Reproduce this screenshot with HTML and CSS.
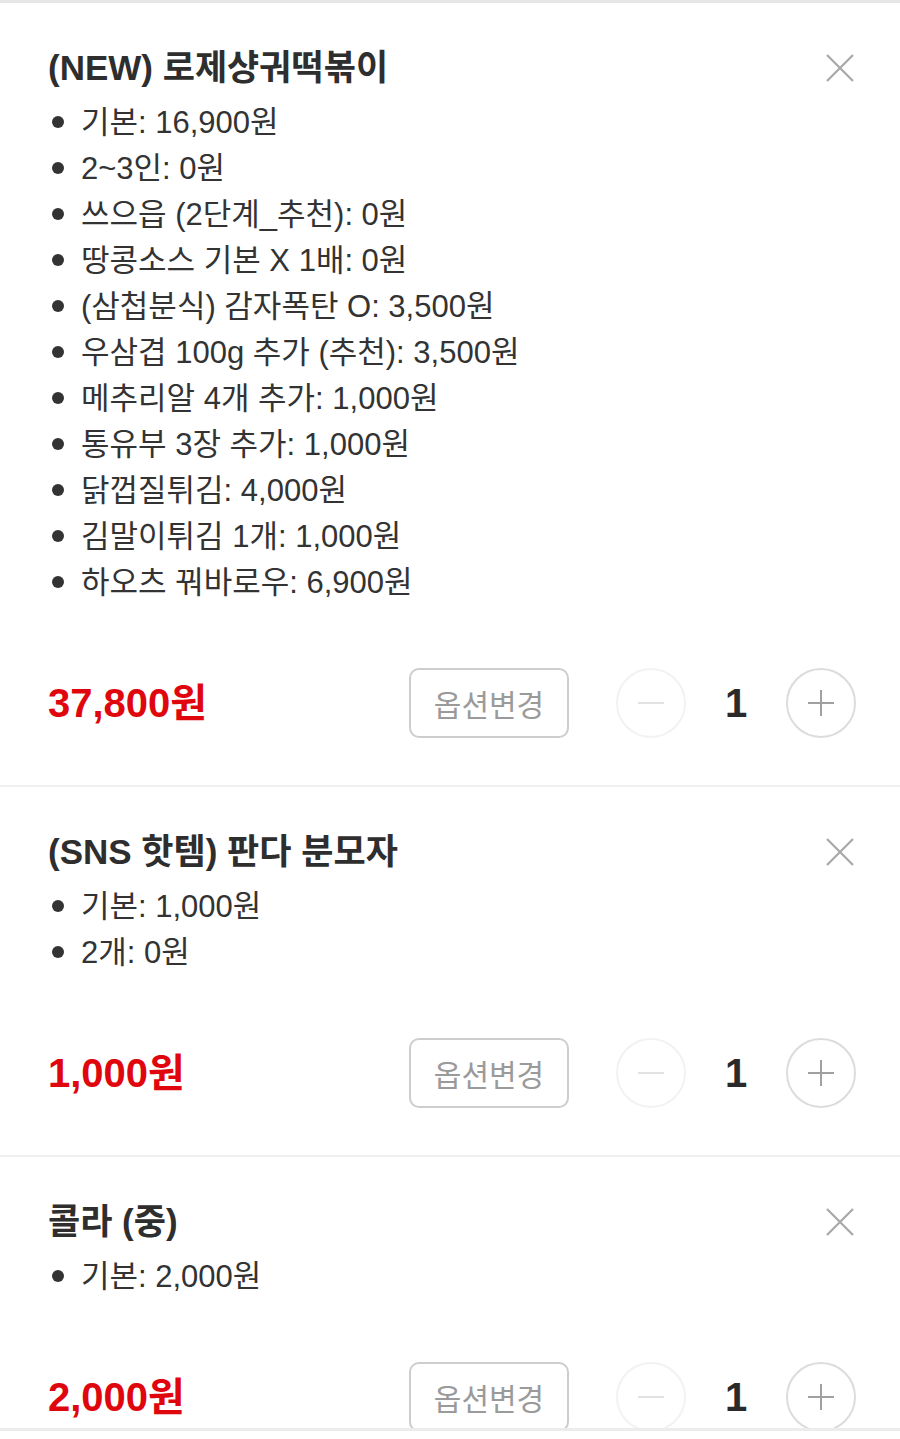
FILE: index.html
```html
<!DOCTYPE html>
<html lang="ko">
<head>
  <meta charset="UTF-8" />
  <meta name="viewport" content="width=device-width, initial-scale=1.0"/>
  <title>장바구니</title>
  <link rel="stylesheet" href="styles.css">
</head>
<body>

  <div class="cart-list">

    <div class="cart-item">
      <div class="item-head">
        <h3>(NEW) 로제샹궈떡볶이</h3>
        <button class="remove-btn" aria-label="삭제">
          <svg width="28" height="28" viewBox="0 0 28 28"><path d="M1 1L27 27M27 1L1 27" stroke="#a8a8a8" stroke-width="2.2" fill="none"/></svg>
        </button>
      </div>
      <ul class="option-list">
        <li>기본: 16,900원</li>
        <li>2~3인: 0원</li>
        <li>쓰으읍 (2단계_추천): 0원</li>
        <li>땅콩소스 기본 X 1배: 0원</li>
        <li>(삼첩분식) 감자폭탄 O: 3,500원</li>
        <li>우삼겹 100g 추가 (추천): 3,500원</li>
        <li>메추리알 4개 추가: 1,000원</li>
        <li>통유부 3장 추가: 1,000원</li>
        <li>닭껍질튀김: 4,000원</li>
        <li>김말이튀김 1개: 1,000원</li>
        <li>하오츠 꿔바로우: 6,900원</li>
      </ul>
      <div class="item-foot">
        <span class="price">37,800원</span>
        <button class="option-btn">옵션변경</button>
        <div class="qty">
          <button class="qty-btn minus"><svg width="28" height="28" viewBox="0 0 28 28"><path d="M1 14H27" stroke="#e2e2e2" stroke-width="2"/></svg></button>
          <span class="qty-num">1</span>
          <button class="qty-btn plus"><svg width="28" height="28" viewBox="0 0 28 28"><path d="M1 14H27M14 1V27" stroke="#a0a0a0" stroke-width="2"/></svg></button>
        </div>
      </div>
    </div>

    <div class="cart-item">
      <div class="item-head">
        <h3>(SNS 핫템) 판다 분모자</h3>
        <button class="remove-btn" aria-label="삭제">
          <svg width="28" height="28" viewBox="0 0 28 28"><path d="M1 1L27 27M27 1L1 27" stroke="#a8a8a8" stroke-width="2.2" fill="none"/></svg>
        </button>
      </div>
      <ul class="option-list">
        <li>기본: 1,000원</li>
        <li>2개: 0원</li>
      </ul>
      <div class="item-foot">
        <span class="price">1,000원</span>
        <button class="option-btn">옵션변경</button>
        <div class="qty">
          <button class="qty-btn minus"><svg width="28" height="28" viewBox="0 0 28 28"><path d="M1 14H27" stroke="#e2e2e2" stroke-width="2"/></svg></button>
          <span class="qty-num">1</span>
          <button class="qty-btn plus"><svg width="28" height="28" viewBox="0 0 28 28"><path d="M1 14H27M14 1V27" stroke="#a0a0a0" stroke-width="2"/></svg></button>
        </div>
      </div>
    </div>

    <div class="cart-item">
      <div class="item-head">
        <h3>콜라 (중)</h3>
        <button class="remove-btn" aria-label="삭제">
          <svg width="28" height="28" viewBox="0 0 28 28"><path d="M1 1L27 27M27 1L1 27" stroke="#a8a8a8" stroke-width="2.2" fill="none"/></svg>
        </button>
      </div>
      <ul class="option-list">
        <li>기본: 2,000원</li>
      </ul>
      <div class="item-foot">
        <span class="price">2,000원</span>
        <button class="option-btn">옵션변경</button>
        <div class="qty">
          <button class="qty-btn minus"><svg width="28" height="28" viewBox="0 0 28 28"><path d="M1 14H27" stroke="#e2e2e2" stroke-width="2"/></svg></button>
          <span class="qty-num">1</span>
          <button class="qty-btn plus"><svg width="28" height="28" viewBox="0 0 28 28"><path d="M1 14H27M14 1V27" stroke="#a0a0a0" stroke-width="2"/></svg></button>
        </div>
      </div>
    </div>

  </div>

  <div class="bottom-bar"></div>

</body>
</html>
```

FILE: styles.css
```css
* {
  box-sizing: border-box;
}

body {
  margin: 0;
  padding: 0;
  background-color: #fff;
  font-family: 'Liberation Sans', 'Noto Sans CJK KR', sans-serif;
  color: #333;
  height: 1439px;
  overflow: hidden;
}

.cart-list {
  border-top: 3px solid #e6e6e6;
}

.cart-item {
  padding: 42px 44px 47px 48px;
  border-bottom: 2px solid #f0f0f0;
}

.item-head {
  display: flex;
  justify-content: space-between;
  align-items: center;
  height: 46px;
}

.item-head h3 {
  margin: 0;
  font-size: 35px;
  line-height: 46px;
  font-weight: bold;
  color: #2e2e2e;
}

.remove-btn {
  background: none;
  border: none;
  padding: 0;
  margin-right: 2px;
  width: 28px;
  height: 28px;
  cursor: pointer;
}

.remove-btn svg {
  display: block;
}

.option-list {
  list-style: none;
  margin: 9px 0 0;
  padding: 0;
}

.option-list li {
  position: relative;
  padding-left: 33px;
  font-size: 31px;
  line-height: 46px;
  color: #333;
}

.option-list li::before {
  content: "";
  position: absolute;
  left: 4px;
  top: 16px;
  width: 12px;
  height: 12px;
  border-radius: 50%;
  background-color: #333;
}

.item-foot {
  display: flex;
  align-items: center;
  height: 70px;
  margin-top: 62px;
}

.price {
  flex: 1;
  font-size: 40px;
  line-height: 46px;
  font-weight: bold;
  color: #e0060e;
}

.option-btn {
  width: 160px;
  height: 70px;
  background-color: #fff;
  border: 2px solid #cdcdcd;
  border-radius: 10px;
  font-family: inherit;
  font-size: 30px;
  color: #9a9a9a;
  cursor: pointer;
}

.qty {
  display: flex;
  align-items: center;
  margin-left: 47px;
}

.qty-btn {
  width: 70px;
  height: 70px;
  border-radius: 50%;
  background-color: #fff;
  border: 2px solid #dcdcdc;
  padding: 0;
  display: flex;
  justify-content: center;
  align-items: center;
  cursor: pointer;
}

.qty-btn.minus {
  border-color: #f2f2f2;
}

.qty-num {
  width: 100px;
  text-align: center;
  font-size: 40px;
  font-weight: bold;
  color: #2a2a2a;
}

.bottom-bar {
  position: fixed;
  left: 0;
  right: 0;
  bottom: 0;
  height: 11px;
  background-color: #fff;
  border-top: 3px solid #ececec;
}
```
